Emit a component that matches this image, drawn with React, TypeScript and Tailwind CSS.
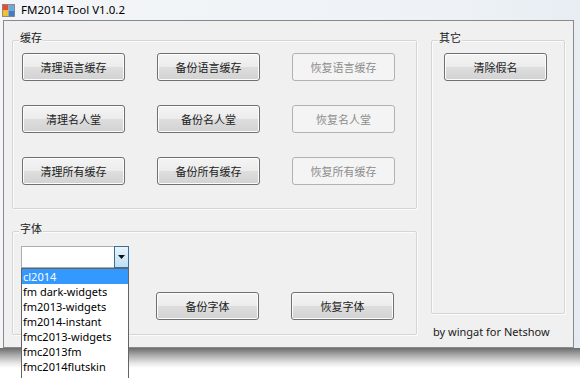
import React from 'react';

const font = 'font-["Noto_Sans","Noto_Sans_CJK_SC",sans-serif]';

const btn =
  'h-[28px] w-[103px] rounded-[3px] border border-[#707070] bg-[linear-gradient(#f4f4f4,#ececec_50%,#dedede_50%,#d2d2d2)] shadow-[inset_0_0_0_1px_#fcfcfc] text-[11px] leading-none text-[#1c1c1c]';
const btnOff =
  'h-[28px] w-[103px] rounded-[3px] border border-[#b0b3b6] bg-[#f4f4f4] text-[11px] leading-none text-[#8d8d8d]';

function Btn({ label, disabled }: { label: string; disabled?: boolean }) {
  return <button className={disabled ? btnOff : btn}>{label}</button>;
}

function Group({ title, className, children }: { title: string; className: string; children?: React.ReactNode }) {
  return (
    <div
      className={`relative rounded-[2px] border border-[#d5d5d5] shadow-[inset_1px_1px_0_#fbfbfb,1px_1px_0_#fbfbfb] ${className}`}
    >
      <span className="absolute left-[6px] top-[-9px] bg-[#f0f0f0] px-[1px] text-[11px] leading-[12px] text-[#1a1a1a]">
        {title}
      </span>
      {children}
    </div>
  );
}

const fonts = [
  'cl2014',
  'fm dark-widgets',
  'fm2013-widgets',
  'fm2014-instant',
  'fmc2013-widgets',
  'fmc2013fm',
  'fmc2014flutskin',
];

function AppIcon() {
  return (
    <svg width="13" height="13" viewBox="0 0 13 13">
      <rect x="0.5" y="0.5" width="6" height="6" fill="#e0502a" />
      <rect x="6.5" y="0.5" width="6" height="6" fill="#6fa8dc" />
      <rect x="0.5" y="6.5" width="6" height="6" fill="#f2c12e" />
      <rect x="6.5" y="6.5" width="6" height="6" fill="#3f7fc7" />
      <rect x="0.5" y="0.5" width="12" height="12" fill="none" stroke="#7a7a7a" strokeWidth="0.8" />
    </svg>
  );
}

export default function App() {
  return (
    <div className={`relative h-[378px] w-[580px] overflow-hidden bg-white ${font}`}>
      <div className="bg-[linear-gradient(100deg,#f3f5f8_0%,#eef2f6_70%,#e4ebf2_100%)] pl-[3px] pr-[6px]">
        {/* title bar */}
        <div className="-ml-[1px] flex h-[20px] items-center gap-[6px]">
          <AppIcon />
          <span className="text-[11.5px] leading-none text-black">FM2014 Tool V1.0.2</span>
        </div>

        {/* client area */}
        <div className="flex h-[328px] border border-[#8a8a8a] bg-[#f0f0f0] px-[8px] pt-[19px]">
          <div className="w-[405px] shrink-0">
            <Group title="缓存" className="h-[169px] pl-[9px] pt-[12px]">
              <div className="grid grid-cols-[103px_103px_103px] gap-x-[32px] gap-y-[24px]">
                <Btn label="清理语言缓存" />
                <Btn label="备份语言缓存" />
                <Btn label="恢复语言缓存" disabled />
                <Btn label="清理名人堂" />
                <Btn label="备份名人堂" />
                <Btn label="恢复名人堂" disabled />
                <Btn label="清理所有缓存" />
                <Btn label="备份所有缓存" />
                <Btn label="恢复所有缓存" disabled />
              </div>
            </Group>
            <Group title="字体" className="mt-[22px] h-[104px] pl-[8px] pt-[14px]">
              <div className="flex h-[22px] w-[108px] border border-[#abadb3] bg-white">
                <div className="flex-1" />
                <div className="-my-px -mr-px flex w-[15px] items-center justify-center border border-[#3c6f96] bg-[linear-gradient(#e6f4fc,#bfe0f3)]">
                  <svg width="7" height="4" viewBox="0 0 7 4">
                    <path d="M0 0h7L3.5 4z" fill="#111" />
                  </svg>
                </div>
              </div>
              <div className="mt-[24px] grid grid-cols-[103px_103px_103px] gap-x-[32px]">
                <div />
                <Btn label="备份字体" />
                <Btn label="恢复字体" />
              </div>
            </Group>
          </div>

          <div className="ml-[14px] w-[134px] shrink-0">
            <Group title="其它" className="h-[274px] pl-[12px] pt-[12px]">
              <Btn label="清除假名" />
            </Group>
            <div className="mt-[10px] pl-[2px] text-[11px] leading-[16px] text-[#1a1a1a]">by wingat for Netshow</div>
          </div>
        </div>
      </div>

      {/* window shadow */}
      <div className="h-[20px] bg-[linear-gradient(#6c6c6c,#a9a9a9_35%,#e6e6e6_75%,#ffffff)]" />

      {/* opened combo list */}
      <div className="absolute left-[21px] top-[268px] h-[130px] w-[108px] border border-[#646464] bg-white">
        {fonts.map((f, i) => (
          <div
            key={f}
            className={`h-[15px] pl-[1px] text-[11px] leading-[15px] ${i === 0 ? 'bg-[#3399ff] text-white' : 'text-black'}`}
          >
            {f}
          </div>
        ))}
      </div>
    </div>
  );
}
